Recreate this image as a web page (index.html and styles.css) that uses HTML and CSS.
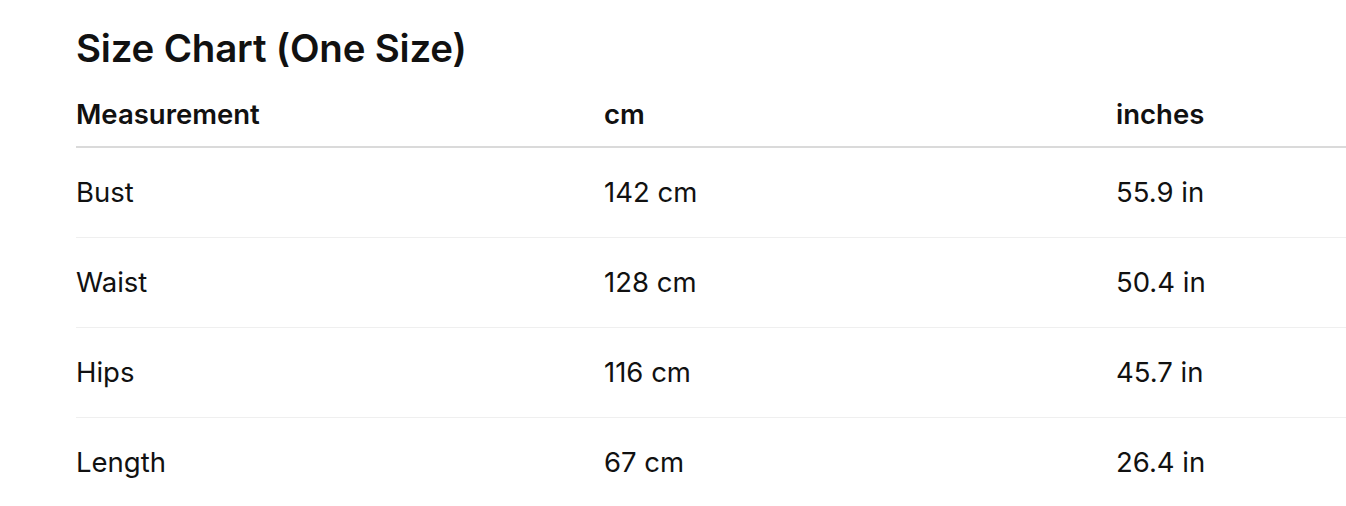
FILE: index.html
```html
<!DOCTYPE html>
<html>
<head>
<meta charset="utf-8">
<link rel="stylesheet" href="styles.css">
</head>
<body>
<section class="chart">
  <h2 class="chart-title">Size Chart (One Size)</h2>
  <table class="size-table">
    <colgroup>
      <col class="col-a"><col class="col-b"><col class="col-c">
    </colgroup>
    <thead>
      <tr><th>Measurement</th><th>cm</th><th>inches</th></tr>
    </thead>
    <tbody>
      <tr><td>Bust</td><td>142 cm</td><td>55.9 in</td></tr>
      <tr><td>Waist</td><td>128 cm</td><td>50.4 in</td></tr>
      <tr><td>Hips</td><td>116 cm</td><td>45.7 in</td></tr>
      <tr><td>Length</td><td>67 cm</td><td>26.4 in</td></tr>
    </tbody>
  </table>
</section>
</body>
</html>
```
FILE: styles.css
```css
html, body {
  margin: 0;
  padding: 0;
  background: #fff;
}
body {
  font-family: Inter, "Noto Sans", sans-serif;
  color: #111;
  overflow: hidden;
}
.chart {
  padding: 22px 0 0 76px;
}
.chart-title {
  margin: 0;
  font-size: 38.5px;
  font-weight: 600;
  line-height: 52px;
  letter-spacing: -0.2px;
}
.size-table {
  width: 1270px;
  border-collapse: collapse;
  table-layout: fixed;
  margin-top: 24px;
}
.col-a { width: 528px; }
.col-b { width: 512px; }
.size-table th {
  text-align: left;
  font-size: 27.5px;
  font-weight: 600;
  padding: 0 0 16px 0;
  line-height: 32px;
  border-bottom: 2px solid #dadada;
}
.size-table td {
  font-size: 27.5px;
  font-weight: 400;
  line-height: 32px;
  height: 87px;
  padding: 0 0 2px 0;
  vertical-align: middle;
  border-bottom: 1px solid #efefef;
}
.size-table tbody tr:last-child td {
  border-bottom: none;
}
```
